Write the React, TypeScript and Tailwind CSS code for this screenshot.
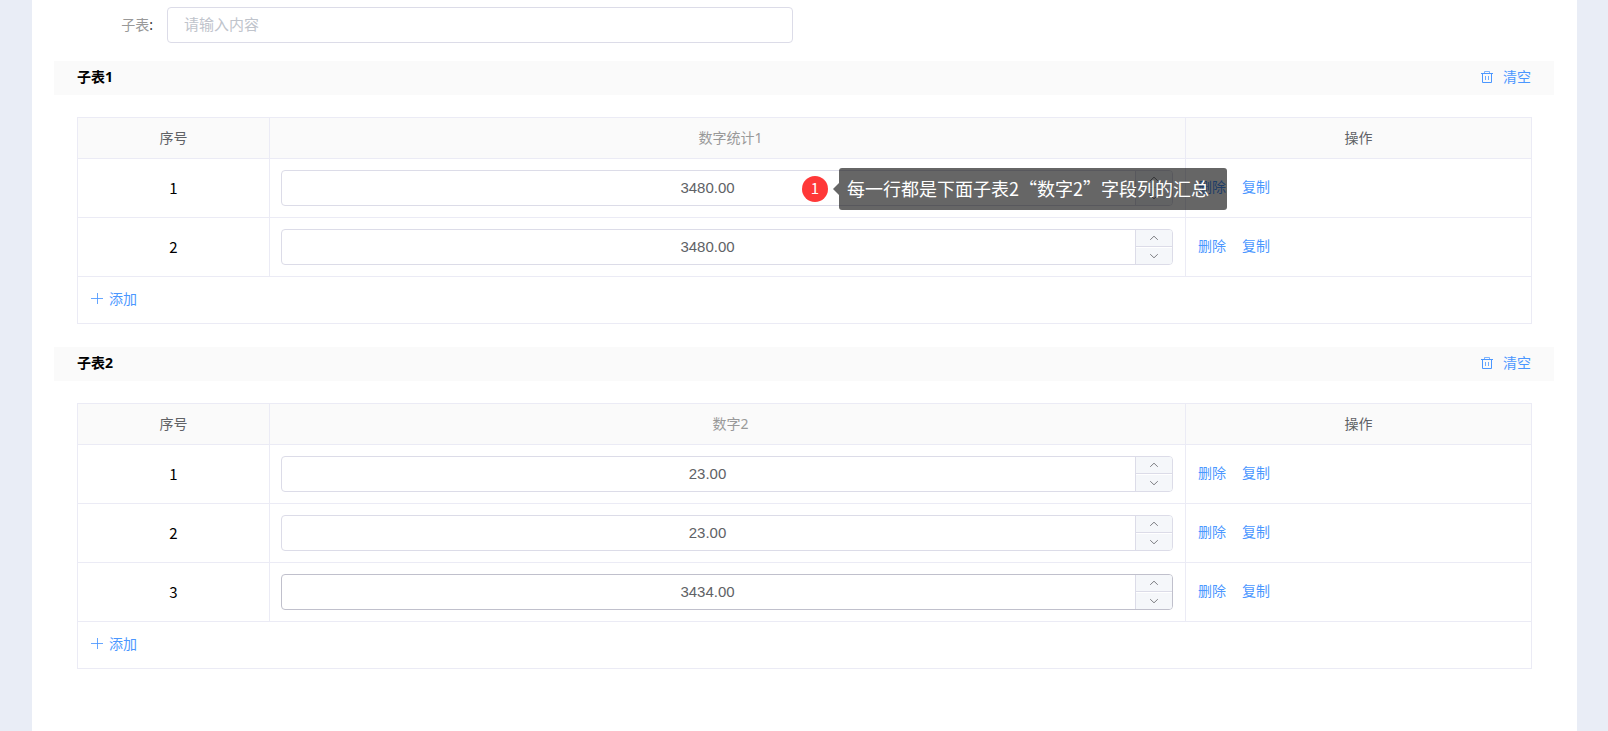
type SubTableProps = {
  title: string;
  column: string;
  values: string[];
  activeRow?: number;
  tip?: string;
};

const TrashIcon = () => (
  <svg
    className="h-[14px] w-3"
    viewBox="0 0 12 14"
    fill="none"
    stroke="currentColor"
    strokeWidth="1"
    aria-hidden="true"
  >
    <path d="M0 3.5h12M1.5 3.5v9h9v-9" />
    <path d="M3.5 3V1.5h5V3" strokeOpacity="0.7" />
    <path d="M4.5 6v4M7.5 6v4" strokeOpacity="0.8" />
  </svg>
);

const PlusIcon = () => (
  <svg
    className="h-3 w-3"
    viewBox="0 0 12 12"
    fill="none"
    stroke="currentColor"
    strokeWidth="1"
    strokeOpacity="0.85"
    aria-hidden="true"
  >
    <path d="M0 5.5h12M6.5 0v11" />
  </svg>
);

const ArrowIcon = ({ down = false }: { down?: boolean }) => (
  <svg
    className="h-[6px] w-[10px]"
    viewBox="0 0 10 6"
    fill="none"
    stroke="currentColor"
    strokeWidth="0.9"
    aria-hidden="true"
  >
    <path d={down ? "M1.2 1.2L5 4.8l3.8-3.6" : "M1.2 4.8L5 1.2l3.8 3.6"} />
  </svg>
);

const NumberTip = ({ text }: { text: string }) => (
  <div className="pointer-events-none absolute -top-0.5 left-[58.4%] z-10 flex items-center font-['Noto_Sans_CJK_SC',sans-serif] whitespace-nowrap text-white">
    <span className="flex h-[26px] w-[26px] justify-center rounded-full bg-[#ff3838] text-[15px] leading-6">
      1
    </span>
    <svg className="ml-[5px] h-3 w-1.5" viewBox="0 0 6 12" aria-hidden="true">
      <path d="M6 0v12L0 6z" fill="#000" fillOpacity="0.6" />
    </svg>
    <span className="h-[42px] rounded-[3px] bg-black/60 pr-[18px] pl-2 text-lg leading-10">
      {text}
    </span>
  </div>
);

const NumberField = ({
  label,
  value,
  active,
  tip,
}: {
  label: string;
  value: string;
  active: boolean;
  tip?: string;
}) => (
  <div className="relative">
    <div
      className={
        "flex h-9 overflow-hidden rounded border bg-white " +
        (active ? "border-[#c0c0cc]" : "border-[#dcdce8]")
      }
    >
      <input
        type="text"
        inputMode="decimal"
        aria-label={label}
        defaultValue={value}
        className="min-w-0 flex-1 pr-0.5 text-center font-['Liberation_Sans',sans-serif] text-[15px] text-[#606266] outline-none"
      />
      <div className="flex w-[37px] flex-col border-l border-[#dcdce8] text-[#707276]">
        <button
          type="button"
          aria-label="增加"
          className="flex h-[17px] items-center justify-center border-b border-[#dcdce8] bg-[#f5f7fa]"
        >
          <ArrowIcon />
        </button>
        <button
          type="button"
          aria-label="减少"
          className="mt-px flex flex-1 items-center justify-center bg-[#f5f7fa]"
        >
          <ArrowIcon down />
        </button>
      </div>
    </div>
    {tip && <NumberTip text={tip} />}
  </div>
);

const SubTable = ({ title, column, values, activeRow, tip }: SubTableProps) => {
  return (
    <section className="mb-[23px]">
      <div className="mr-[23px] ml-[22px] flex h-[34px] items-center justify-between bg-[#fafafa] px-[23px] pb-0.5">
        <h2 className="font-bold text-black">{title}</h2>
        <button type="button" className="flex items-center gap-2.5 text-[#4b97ff]">
          <TrashIcon />
          清空
        </button>
      </div>
      <div className="mx-[45px] mt-[22px] border border-[#ebebf5]">
        <table className="w-full table-fixed border-separate border-spacing-0">
          <thead>
            <tr className="h-[41px] bg-[#fafafa]">
              <th className="w-48 border-r border-b border-[#ebebf5] font-normal text-[#606266]">
                序号
              </th>
              <th className="border-r border-b border-[#ebebf5] pl-1.5 font-normal text-[#999]">
                {column}
              </th>
              <th className="w-[345px] border-b border-[#ebebf5] font-normal text-[#606266]">
                操作
              </th>
            </tr>
          </thead>
          <tbody>
            {values.map((value, index) => (
              <tr key={index} className="h-[59px]">
                <td className="border-r border-b border-[#ebebf5] text-center font-['Noto_Sans_CJK_SC',sans-serif] text-[15px] text-black">
                  {index + 1}
                </td>
                <td className="border-r border-b border-[#ebebf5] pr-3 pl-[11px]">
                  <NumberField
                    label={column + " " + (index + 1)}
                    value={value}
                    active={index === activeRow}
                    tip={index === 0 ? tip : undefined}
                  />
                </td>
                <td className="border-b border-[#ebebf5] px-3 pb-0.5">
                  <div className="flex gap-4 text-[#4b97ff]">
                    <button type="button">删除</button>
                    <button type="button">复制</button>
                  </div>
                </td>
              </tr>
            ))}
          </tbody>
        </table>
        <div className="flex h-[46px] items-center px-[13px] pb-0.5">
          <button type="button" className="flex items-center gap-1.5 text-[#4b97ff]">
            <PlusIcon />
            添加
          </button>
        </div>
      </div>
    </section>
  );
};

const App = () => {
  return (
    <div className="min-h-screen bg-[#e9edf6] pr-[31px] pl-8 font-['Noto_Sans','Noto_Sans_CJK_SC',sans-serif] text-sm">
      <main className="min-h-screen bg-white pt-[7px]">
        <div className="mb-[18px] flex items-center">
          <label htmlFor="sub" className="w-[121px] text-right text-[#999]">
            子表<span className="text-[#333]">:</span>
          </label>
          <input
            id="sub"
            type="text"
            placeholder="请输入内容"
            className="ml-3.5 h-9 w-[626px] rounded border border-[#dcdce8] px-4 pb-0.5 text-[15px] outline-none placeholder:text-[#c0c4cc]"
          />
        </div>
        <SubTable
          title="子表1"
          column="数字统计1"
          values={["3480.00", "3480.00"]}
          tip="每一行都是下面子表2“数字2”字段列的汇总"
        />
        <SubTable
          title="子表2"
          column="数字2"
          values={["23.00", "23.00", "3434.00"]}
          activeRow={2}
        />
      </main>
    </div>
  );
};

export default App;
